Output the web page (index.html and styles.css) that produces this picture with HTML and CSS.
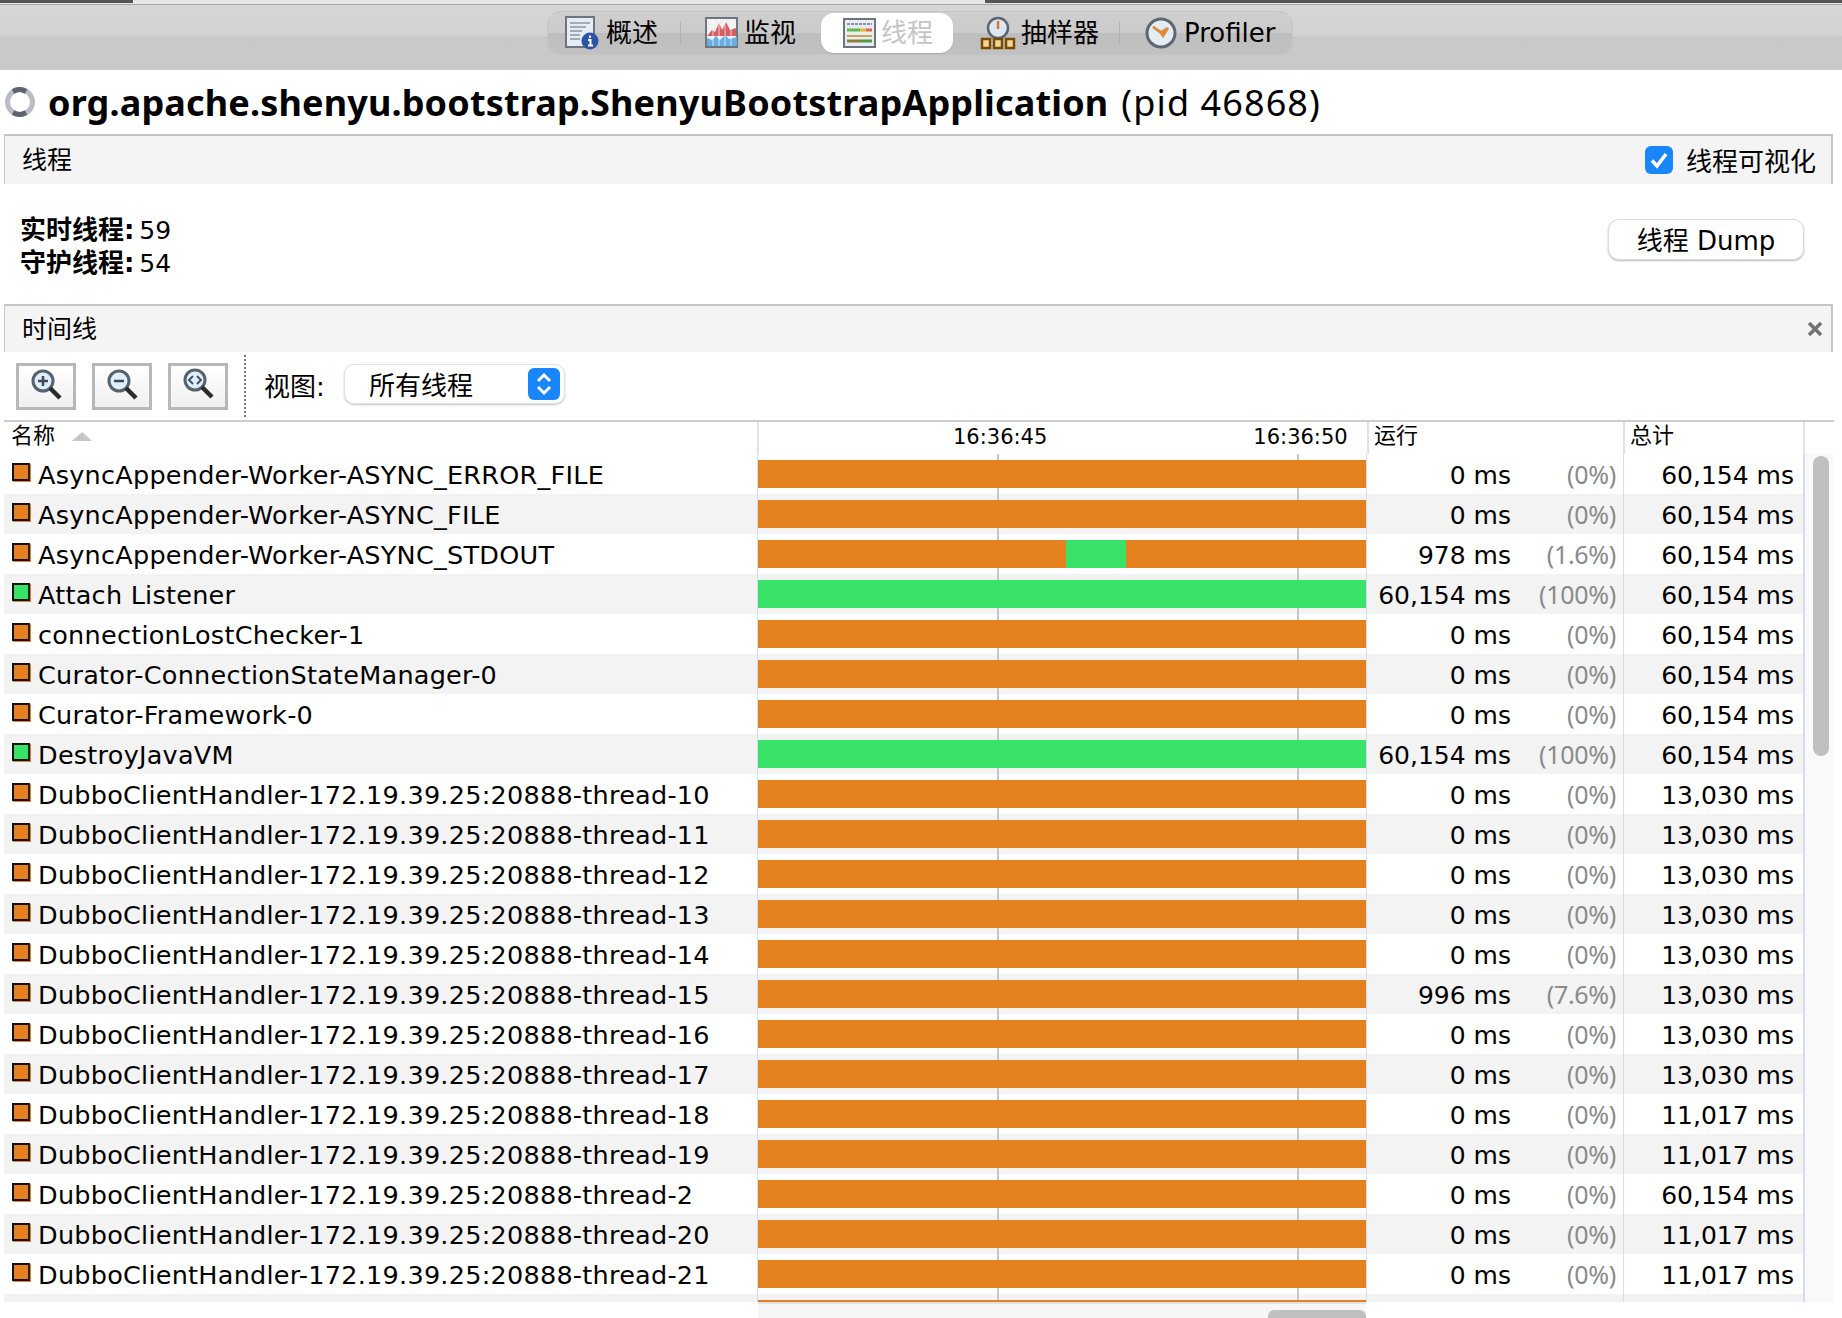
FILE: index.html
```html
<!DOCTYPE html>
<html lang="zh">
<head>
<meta charset="utf-8">
<title>线程</title>
<link rel="stylesheet" href="styles.css">
</head>
<body>
<div class="strip"><span class="strip-dark-l"></span><span class="strip-mid"></span><span class="strip-dark-r"></span></div>
<header class="toolbar">
  <nav class="tabs">
    <a class="tab t1">
      <svg width="34" height="34" viewBox="0 0 34 34"><rect x="1" y="1" width="28" height="30" fill="#e6ecf3" stroke="#6d7680" stroke-width="2"/><path d="M5 7h20M5 11h16M5 15h12M5 19h10M5 23h10" stroke="#a3acb6" stroke-width="2"/><circle cx="25" cy="25" r="8.500" fill="#2d54a8"/><path d="M25 19.500v2.500M23 24h2.500v5M23 29.500h5" stroke="#fff" stroke-width="2" fill="none"/></svg>
      <span>概述</span>
    </a>
    <i class="sep"></i>
    <a class="tab t2">
      <svg width="34" height="34" viewBox="0 0 34 34"><rect x="1" y="2" width="31" height="29" fill="#f1f1f1" stroke="#6d7680" stroke-width="2"/><path d="M2 20l5-6 3 2 4-9 3 7 4-8 4 8 6-2v8H2z" fill="#d45f63"/><path d="M2 30v-8l5 2 4-4 4 4 5-5 4 4 8-2v9z" fill="#66aee3"/><path d="M8 3v27M14 3v27M20 3v27M26 3v27" stroke="#fff" stroke-opacity=".45" stroke-width="1.500"/></svg>
      <span>监视</span>
    </a>
    <a class="tab active t3">
      <svg width="34" height="34" viewBox="0 0 34 34"><rect x="1" y="3" width="31" height="28" fill="#e9edf1" stroke="#6d7680" stroke-width="2"/><path d="M4 8h25" stroke="#8494a8" stroke-width="2" stroke-dasharray="3 1"/><path d="M4 14h13" stroke="#5fb84c" stroke-width="3"/><path d="M17 14h6" stroke="#e6b13c" stroke-width="3"/><path d="M23 14h6" stroke="#d9694a" stroke-width="3"/><path d="M4 20h25" stroke="#c9a45a" stroke-width="2"/><path d="M4 25h14" stroke="#8d7f3a" stroke-width="3"/><path d="M18 25h11" stroke="#4f9a45" stroke-width="3"/></svg>
      <span>线程</span>
    </a>
    <a class="tab t4">
      <svg width="36" height="34" viewBox="0 0 36 34"><circle cx="18" cy="12" r="10" fill="#dbe7f2" stroke="#5e6670" stroke-width="2.500"/><path d="M18 5v8" stroke="#d9772a" stroke-width="2.500"/><g fill="#f0d69a" stroke="#7a4a00" stroke-width="2.500"><rect x="2" y="23" width="8" height="9"/><rect x="14" y="23" width="8" height="9"/><rect x="26" y="23" width="8" height="9"/></g></svg>
      <span>抽样器</span>
    </a>
    <i class="sep"></i>
    <a class="tab t5">
      <svg width="34" height="34" viewBox="0 0 34 34"><circle cx="17" cy="17" r="14" fill="#e4edf5" stroke="#5e6670" stroke-width="3"/><path d="M9 11l8 5 7-4-5 8-2-3z" fill="#e08a3a" stroke="#e08a3a" stroke-width="2.500"/></svg>
      <span>Profiler</span>
    </a>
  </nav>
</header>

<h1 class="title">
  <svg class="spinner" width="32" height="32" viewBox="0 0 32 32"><circle cx="16" cy="16" r="12.500" fill="none" stroke="#b9bcc4" stroke-width="5"/><path d="M9 5.500a12.500 12.500 0 0 1 13 0M9 26.500a12.500 12.500 0 0 0 13 0" fill="none" stroke="#5d6170" stroke-width="5"/></svg>
  <b>org.apache.shenyu.bootstrap.ShenyuBootstrapApplication</b><span class="pid">(pid 46868)</span>
</h1>

<section class="bar bar-a">
  <span>线程</span>
  <label class="check">
    <svg width="28" height="28" viewBox="0 0 28 28"><rect width="28" height="28" rx="6" fill="#1a86fb"/><path d="M7 14.500l5 5.500 9-12" fill="none" stroke="#fff" stroke-width="3.600"/></svg>
    <span>线程可视化</span>
  </label>
</section>

<section class="info">
  <div class="stats">
    <div><b>实时线程:</b> 59</div>
    <div><b>守护线程:</b> 54</div>
  </div>
  <button class="dump">线程 Dump</button>
</section>

<section class="bar bar-b">
  <span>时间线</span>
  <svg class="close" width="16" height="16" viewBox="0 0 16 16"><path d="M2 2l12 12M14 2L2 14" stroke="#727272" stroke-width="3.500"/></svg>
</section>

<section class="tools">
  <button class="zoom"><svg width="40" height="40" viewBox="0 0 40 40"><circle cx="17" cy="15" r="10" fill="#dfeefa" stroke="#56626c" stroke-width="3"/><path d="M24 22l10 10" stroke="#2b2b2b" stroke-width="4.500"/><path d="M12 15h10M17 10v10" stroke="#3f4a55" stroke-width="2.500"/></svg></button>
  <button class="zoom"><svg width="40" height="40" viewBox="0 0 40 40"><circle cx="17" cy="15" r="10" fill="#dfeefa" stroke="#56626c" stroke-width="3"/><path d="M24 22l10 10" stroke="#2b2b2b" stroke-width="4.500"/><path d="M12 15h10" stroke="#3f4a55" stroke-width="2.500"/></svg></button>
  <button class="zoom"><svg width="40" height="40" viewBox="0 0 40 40"><circle cx="17" cy="14" r="10" fill="#dfeefa" stroke="#56626c" stroke-width="3"/><path d="M24 21l10 10" stroke="#2b2b2b" stroke-width="4.500"/><path d="M15 10l-4 4 4 4M19 10l4 4-4 4" fill="none" stroke="#3f4a55" stroke-width="1.800"/></svg></button>
  <i class="dots"></i>
  <span class="view-label">视图:</span>
  <div class="select"><span>所有线程</span>
    <svg width="32" height="32" viewBox="0 0 32 32"><rect width="32" height="32" rx="6" fill="#1a86fb"/><path d="M10 13l6-6 6 6M10 19l6 6 6-6" fill="none" stroke="#fff" stroke-width="3"/></svg>
  </div>
</section>

<section class="table">
  <div class="row head">
    <div class="c-name">名称<i class="sort"></i></div>
    <div class="c-time"><span>16:36:45</span><span>16:36:50</span></div>
    <div class="c-run">运行</div>
    <div class="c-total">总计</div>
    <div class="c-sb"></div>
  </div>
  <div class="body">
    <div class="rows" id="rows"></div>
    <div class="vtrack"><div class="vthumb"></div></div>
  </div>
  <div class="hbar"><div class="htrack"><div class="hthumb"></div></div></div>
</section>
<script src="app.js"></script>
</body>
</html>
```
FILE: app.js
```js
var o = 'park', g = 'run';
var data = [
  ['AsyncAppender-Worker-ASYNC_ERROR_FILE', o, '0 ms', '(0%)', '60,154 ms'],
  ['AsyncAppender-Worker-ASYNC_FILE', o, '0 ms', '(0%)', '60,154 ms'],
  ['AsyncAppender-Worker-ASYNC_STDOUT', 'mix', '978 ms', '(1.6%)', '60,154 ms'],
  ['Attach Listener', g, '60,154 ms', '(100%)', '60,154 ms'],
  ['connectionLostChecker-1', o, '0 ms', '(0%)', '60,154 ms'],
  ['Curator-ConnectionStateManager-0', o, '0 ms', '(0%)', '60,154 ms'],
  ['Curator-Framework-0', o, '0 ms', '(0%)', '60,154 ms'],
  ['DestroyJavaVM', g, '60,154 ms', '(100%)', '60,154 ms']
];
var p = 'DubboClientHandler-172.19.39.25:20888-thread-';
[10,11,12,13,14,15,16,17,18,19,2,20,21].forEach(function (n) {
  var total = (n >= 18) ? '11,017 ms' : (n === 2 ? '60,154 ms' : '13,030 ms');
  if (n === 15) data.push([p + n, o, '996 ms', '(7.6%)', total]);
  else data.push([p + n, o, '0 ms', '(0%)', total]);
});
var html = data.map(function (d) {
  var bar = d[1] === 'mix'
    ? '<i class="seg o s1"></i><i class="seg g s2"></i><i class="seg o s3"></i>'
    : '<i class="seg ' + (d[1] === g ? 'g' : 'o') + ' full"></i>';
  return '<div class="row"><div class="c-name"><i class="st ' + (d[1] === g ? 'g' : 'o') + '"></i><span class="nm">' + d[0] + '</span></div>' +
    '<div class="c-time"><div class="track">' + bar + '</div></div>' +
    '<div class="c-run"><span class="ms">' + d[2] + '</span><span class="pct">' + d[3] + '</span></div>' +
    '<div class="c-total"><span class="tt">' + d[4] + '</span></div></div>';
}).join('');
html += '<div class="row tail"><div class="c-name"></div><div class="c-time"><div class="track"><i class="seg o full"></i></div></div><div class="c-run"></div><div class="c-total"></div></div>';
document.getElementById('rows').innerHTML = html;
```
FILE: styles.css
```css
* { box-sizing: border-box; }
html, body { margin: 0; padding: 0; }
body {
  width: 1842px; height: 1318px; overflow: hidden; background: #fff; color: #000;
  font-family: "DejaVu Sans", "Noto Sans CJK SC", sans-serif; font-size: 25px;
}
.strip { display: flex; height: 5px; background: #e6e6e6; border-bottom: 1px solid #a8a8a8; }
.strip-dark-l { width: 133px; height: 3px; background: #555; }
.strip-mid { width: 852px; }
.strip-dark-r { flex: 1; height: 3px; background: #555; }

.toolbar {
  height: 65px; display: flex; padding: 6px 0 0 547px;
  background: linear-gradient(#d6d6d6 0, #d2d2d2 31px, #c8c8c8 32px, #c9c9c9 100%);
}
.tabs {
  width: 746px; height: 44px; display: flex; align-items: center;
  background: linear-gradient(#cfcfcf 0, #cbcbcb 50%, #bebebe 51%, #c1c1c1 100%);
  border-radius: 14px; padding: 0 0 0 17px; border: 1px solid #c4c4c4;
}
.tab { display: flex; flex: none; align-items: center; font-size: 26px; height: 40px; }
.tab svg { flex: none; }
.tab span { padding-bottom: 5px; }
.sep { flex: none; width: 1px; height: 24px; background: #b2b2b2; }
.t1 { width: 115px; gap: 7px; }
.t2 { margin-left: 24px; width: 116px; gap: 5px; }
.tab.active {
  width: 132px; padding-left: 22px; gap: 4px; background: #fff; border-radius: 13px; color: #c4c4c4;
  box-shadow: 0 1px 1px #aaa;
}
.t4 { margin-left: 27px; width: 139px; gap: 5px; }
.t5 { margin-left: 24px; gap: 6px; }
.t5 span { padding-bottom: 1px; }

.title { margin: 0; height: 64px; display: flex; align-items: center; padding-left: 4px; font-size: 36px; font-weight: 400; white-space: nowrap; font-family: "Noto Sans", "Noto Sans CJK SC", sans-serif; }
.title b { font-weight: 700; margin-left: 12px; letter-spacing: .15px; }
.pid { margin-left: 13px; letter-spacing: 1.1px; }

.bar {
  margin: 0 9px 0 4px; background: #f4f4f4; border-top: 2px solid #c4c4c4; border-left: 1px solid #c9c9c9;
  border-right: 2px solid #c4c4c4; display: flex; align-items: center; justify-content: space-between;
  padding: 0 15px 0 17px;
}
.bar > span { padding-bottom: 4px; }
.bar-a { height: 50px; }
.bar-b { height: 48px; padding-right: 8px; }
.check { display: flex; align-items: center; gap: 13px; font-size: 26px; }
.check span { padding-bottom: 2px; }
.check svg { display: block; }

.info { height: 120px; display: flex; justify-content: space-between; padding: 30px 38px 0 20px; }
.stats { line-height: 32px; font-size: 25px; }
.stats b { font-weight: 700; font-size: 26px; margin-right: -3px; }
.dump {
  width: 196px; height: 41px; margin-top: 5px; border: 1px solid #dcdcdc; border-radius: 11px; background: #fff;
  box-shadow: 0 1px 2px #bbb; font: inherit; font-size: 26px; padding: 0 0 8px; color: #000;
}

.tools { height: 68px; display: flex; align-items: center; padding-left: 16px; }
.zoom {
  width: 60px; height: 47px; margin-right: 16px; border: 3px solid #b8b8b8; background: linear-gradient(#fff,#f0f0f0);
  padding: 0; display: flex; align-items: center; justify-content: center;
}
.zoom svg { display: block; }
.dots { width: 0; height: 62px; border-left: 2px dotted #777; margin: 0 0 0 0; }
.view-label { margin-left: 18px; font-size: 26px; width: 80px; padding-bottom: 4px; }
.select {
  width: 221px; height: 40px; margin-top: -4px; display: flex; align-items: center; justify-content: space-between; padding: 0 4px 0 24px;
  border-radius: 10px; border: 1px solid #e2e2e2; box-shadow: 0 1px 2px #c4c4c4; font-size: 26px; background: #fff;
}
.select span { padding-bottom: 2px; }
.select svg { display: block; }

.table { border-top: 2px solid #cdcdcd; margin-left: 4px; width: 1830px; }
.row { display: grid; grid-template-columns: 753px 610px 256px 180px; height: 40px; align-items: stretch; white-space: nowrap; }
.rows .row:nth-child(even) { background: #f3f3f3; }
.row > div { display: flex; align-items: center; }
.head { grid-template-columns: 753px 610px 256px 180px 31px; grid-template-rows: 32px; height: 32px; font-size: 22px; line-height: 22px; }
.head > div { border-left: 2px solid #e3e3e3; padding-bottom: 4px; }
.head .c-name { border-left: 0; padding-left: 7px; gap: 0; }
.head .c-time { font-size: 21px; padding-left: 194px; padding-bottom: 2px; gap: 206px; background: none; border-right: 0; }
.head .c-run, .head .c-total { padding-left: 5px; padding-right: 0; justify-content: flex-start; }
.head .c-total { border-right: 0; }
.sort { width: 0; height: 0; margin-left: 17px; border: 10px solid transparent; border-top: 0; border-bottom: 9px solid #c6c6c6; }

.body { display: flex; height: 848px; overflow: hidden; }
.rows { width: 1799px; flex: none; }
.vtrack { flex: 1; background: #f9f9f9; border-left: 2px solid #d3dcf0; border-right: 1px solid #dcdcdc; padding: 2px 5px 0 8px; }
.vthumb { width: 16px; height: 300px; border-radius: 8px; background: #c0c0c0; }
.c-name { padding-left: 8px; gap: 8px; }
.nm { font-size: 25.5px; letter-spacing: .25px; padding-top: 1px; }
.st { flex: none; width: 18px; height: 18px; background: #e6811f; border: 2px solid #111; border-right-color: #222; box-shadow: 1px 1px 0 #e6811f; margin-top: -4px; }
.st.g { background: #39e36a; }
.c-time {
  border-left: 1px solid #d3dcf0; border-right: 1px solid #d3dcf0;
  background: linear-gradient(#c6c6c6,#c6c6c6) 239px 0/2px 100% no-repeat, linear-gradient(#c6c6c6,#c6c6c6) 539px 0/2px 100% no-repeat;
}
.track { width: 100%; height: 28px; display: flex; }
.seg { display: block; height: 100%; }
.seg.o { background: #e6811f; }
.seg.g { background: #39e36a; }
.full { flex: 1; }
.s1 { width: 308px; } .s2 { width: 60px; } .s3 { flex: 1; }
.c-run { justify-content: flex-end; padding-right: 7px; }
.c-run .ms { margin-left: auto; padding-top: 2px; }
.pct { color: #8a8a8a; width: 105px; text-align: right; font-family: "Noto Sans", sans-serif; letter-spacing: -.3px; }
.c-total { justify-content: flex-end; padding-right: 9px; border-left: 1px solid #d3dcf0; }
.tt { padding-top: 2px; }
.tail { height: 8px; overflow: hidden; }
.tail .track { height: 2px; align-self: flex-end; }
.tail .c-time { align-items: flex-end; }

.hbar { display: flex; padding-left: 754px; }
.htrack { width: 608px; height: 16px; background: #f6f6f6; border-top: 2px solid #e2e2e2; display: flex; justify-content: flex-end; padding-top: 6px; }
.hthumb { width: 98px; height: 10px; background: #c0c0c0; border-radius: 6px 6px 0 0; }
```
